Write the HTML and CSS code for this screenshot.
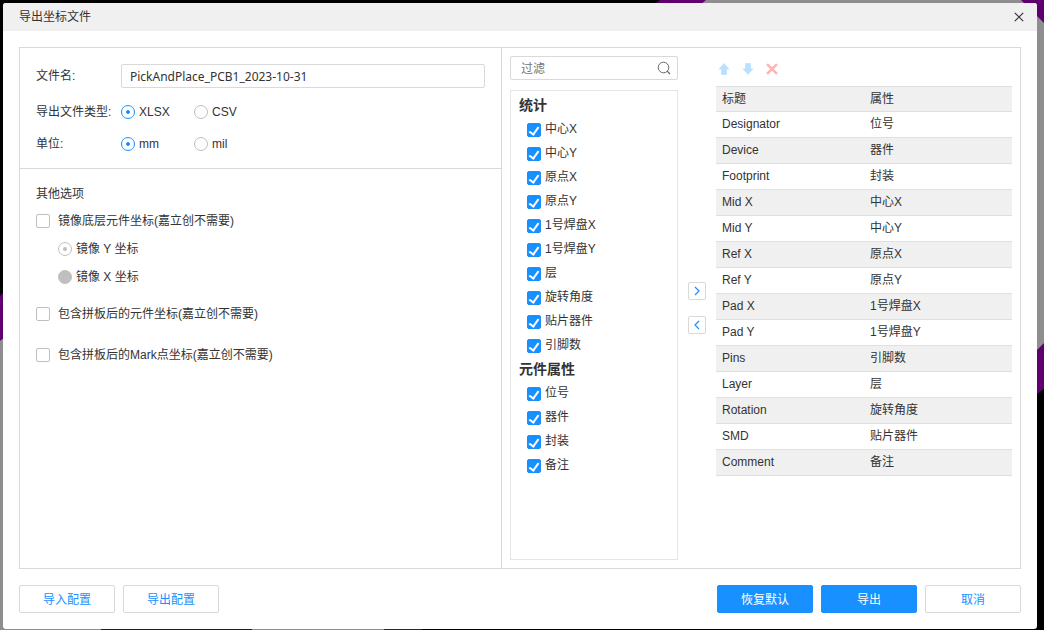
FILE: index.html
```html
<!DOCTYPE html>
<html lang="zh-CN">
<head>
<meta charset="utf-8">
<meta name="viewport" content="width=device-width, initial-scale=1">
<title>导出坐标文件</title>
<link rel="stylesheet" href="styles.css">
</head>
<body>
<svg class="backdrop" viewBox="0 0 1044 630" preserveAspectRatio="none" aria-hidden="true">
  <rect width="1044" height="630" fill="#000"/>
  <path d="M704 0H1044V345L700 630H252L101 630H0V340L300 200Z" fill="#8e8e8e"/>
  <path d="M0 0H660L656 3L3 293L0 296Z" fill="#000"/>
  <path d="M0 296L3 293L656 3L660 0H706L700 5L3 338L0 341Z" fill="#600070"/>
  <path d="M1021 0H1044V23Z" fill="#600070"/>
  <path d="M1044 343V389L1036 395V351Z" fill="#600070"/>
  <path d="M1044 389V630H420V620L1036 395Z" fill="#000"/>
  <path d="M101 620H252V630H101Z" fill="#1c1c1c"/>
  <path d="M384 620H422V630H384Z" fill="#600070"/>
</svg>
<form class="dialog">
  <header class="titlebar">
    <h1 class="title">导出坐标文件</h1>
    <button class="close" type="button" aria-label="关闭">
      <svg width="10" height="10" viewBox="0 0 10 10"><path d="M.8.8l8.4 8.4M9.2.8L.8 9.2" stroke="#333" stroke-width="1.2" fill="none"/></svg>
    </button>
  </header>
  <main class="content">
    <section class="settings">
      <div class="basic">
        <div class="row">
          <label class="row-label" for="filename">文件名:</label>
          <input class="textbox filename" id="filename" type="text" value="PickAndPlace_PCB1_2023-10-31">
        </div>
        <div class="row" role="radiogroup" aria-label="导出文件类型">
          <span class="row-label">导出文件类型:</span>
          <label class="choice"><input class="radio" type="radio" name="type" checked>XLSX</label>
          <label class="choice"><input class="radio" type="radio" name="type">CSV</label>
        </div>
        <div class="row" role="radiogroup" aria-label="单位">
          <span class="row-label">单位:</span>
          <label class="choice"><input class="radio" type="radio" name="unit" checked>mm</label>
          <label class="choice"><input class="radio" type="radio" name="unit">mil</label>
        </div>
      </div>
      <div class="others">
        <h2 class="others-title">其他选项</h2>
        <div class="mirror">
          <label class="option"><input class="checkbox" type="checkbox">镜像底层元件坐标(嘉立创不需要)</label>
          <label class="option sub"><input class="radio" type="radio" name="mirror" checked disabled>镜像 Y 坐标</label>
          <label class="option sub"><input class="radio" type="radio" name="mirror" disabled>镜像 X 坐标</label>
        </div>
        <label class="option"><input class="checkbox" type="checkbox">包含拼板后的元件坐标(嘉立创不需要)</label>
        <label class="option"><input class="checkbox" type="checkbox">包含拼板后的Mark点坐标(嘉立创不需要)</label>
      </div>
    </section>
    <section class="columns">
      <div class="picker">
        <div class="search textbox">
          <input class="search-input" type="search" placeholder="过滤" aria-label="过滤">
          <svg width="14" height="14" viewBox="0 0 14 14"><circle cx="6.5" cy="6.5" r="5.3" fill="none" stroke="#666"/><path d="M10.2 10.2l2.8 2.8" stroke="#666" stroke-width="1.2"/></svg>
        </div>
        <div class="list">
          <h3 class="group">统计</h3>
          <label class="item"><input class="checkbox" type="checkbox" checked>中心X</label>
          <label class="item"><input class="checkbox" type="checkbox" checked>中心Y</label>
          <label class="item"><input class="checkbox" type="checkbox" checked>原点X</label>
          <label class="item"><input class="checkbox" type="checkbox" checked>原点Y</label>
          <label class="item"><input class="checkbox" type="checkbox" checked>1号焊盘X</label>
          <label class="item"><input class="checkbox" type="checkbox" checked>1号焊盘Y</label>
          <label class="item"><input class="checkbox" type="checkbox" checked>层</label>
          <label class="item"><input class="checkbox" type="checkbox" checked>旋转角度</label>
          <label class="item"><input class="checkbox" type="checkbox" checked>贴片器件</label>
          <label class="item"><input class="checkbox" type="checkbox" checked>引脚数</label>
          <h3 class="group">元件属性</h3>
          <label class="item"><input class="checkbox" type="checkbox" checked>位号</label>
          <label class="item"><input class="checkbox" type="checkbox" checked>器件</label>
          <label class="item"><input class="checkbox" type="checkbox" checked>封装</label>
          <label class="item"><input class="checkbox" type="checkbox" checked>备注</label>
        </div>
      </div>
      <div class="transfer">
        <button class="move" type="button" aria-label="添加"><svg width="8" height="10" viewBox="0 0 8 10"><path d="M2 1l4 4-4 4" fill="none" stroke="#1890ff" stroke-width="1.2"/></svg></button>
        <button class="move" type="button" aria-label="移除"><svg width="8" height="10" viewBox="0 0 8 10"><path d="M6 1L2 5l4 4" fill="none" stroke="#1890ff" stroke-width="1.2"/></svg></button>
      </div>
      <div class="selected">
        <div class="tools">
          <button class="tool" type="button" aria-label="上移" disabled><svg width="12" height="12" viewBox="0 0 12 12"><path d="M6 0.6L10.8 6H8.4V11.4H3.6V6H1.2Z" fill="#bae0ff" stroke="#bae0ff" stroke-width=".8" stroke-linejoin="round"/></svg></button>
          <button class="tool" type="button" aria-label="下移" disabled><svg width="12" height="12" viewBox="0 0 12 12"><path d="M6 11.4L10.8 6H8.4V.6H3.6V6H1.2Z" fill="#bae0ff" stroke="#bae0ff" stroke-width=".8" stroke-linejoin="round"/></svg></button>
          <button class="tool" type="button" aria-label="删除" disabled><svg width="12" height="12" viewBox="0 0 12 12"><path d="M1.8 1.8l8.4 8.4M10.2 1.8l-8.4 8.4" stroke="#ffb3b3" stroke-width="2.6" stroke-linecap="round"/></svg></button>
        </div>
        <table class="table">
          <thead><tr><th>标题</th><th>属性</th></tr></thead>
          <tbody>
            <tr><td>Designator</td><td>位号</td></tr>
            <tr><td>Device</td><td>器件</td></tr>
            <tr><td>Footprint</td><td>封装</td></tr>
            <tr><td>Mid X</td><td>中心X</td></tr>
            <tr><td>Mid Y</td><td>中心Y</td></tr>
            <tr><td>Ref X</td><td>原点X</td></tr>
            <tr><td>Ref Y</td><td>原点Y</td></tr>
            <tr><td>Pad X</td><td>1号焊盘X</td></tr>
            <tr><td>Pad Y</td><td>1号焊盘Y</td></tr>
            <tr><td>Pins</td><td>引脚数</td></tr>
            <tr><td>Layer</td><td>层</td></tr>
            <tr><td>Rotation</td><td>旋转角度</td></tr>
            <tr><td>SMD</td><td>贴片器件</td></tr>
            <tr><td>Comment</td><td>备注</td></tr>
          </tbody>
        </table>
      </div>
    </section>
  </main>
  <footer class="footer">
    <div class="actions">
      <button class="btn" type="button">导入配置</button>
      <button class="btn" type="button">导出配置</button>
    </div>
    <div class="actions">
      <button class="btn primary" type="button">恢复默认</button>
      <button class="btn primary" type="submit">导出</button>
      <button class="btn" type="button">取消</button>
    </div>
  </footer>
</form>
</body>
</html>
```
FILE: styles.css
```css
*, ::before { box-sizing: border-box; }

body {
  margin: 0;
  min-height: 100vh;
  padding: 3px 7px 1px 3px;
  display: flex;
  background: #000;
  color: #333;
  font: 12px/24px "Liberation Sans", "Noto Sans CJK SC", sans-serif;
}

h1, h2, h3 { margin: 0; font-size: 12px; font-weight: 400; }
button, input { margin: 0; font: inherit; color: inherit; }
button { padding: 0; }
svg { display: block; }

.backdrop { position: absolute; inset: 0; width: 100%; height: 100%; }

.dialog {
  position: relative;
  flex: 1;
  display: flex;
  flex-direction: column;
  background: #fff;
  border-radius: 3px;
  overflow: hidden;
}

.titlebar {
  display: flex;
  align-items: center;
  justify-content: space-between;
  height: 28px;
  padding: 0 8px 0 16px;
  background: #f0f0f0;
}
.close {
  display: grid;
  place-items: center;
  width: 20px;
  height: 20px;
  border: 0;
  background: none;
}

.content {
  flex: 1;
  display: flex;
  margin: 16px 16px 0;
  border: 1px solid #d9d9d9;
}
.settings { flex: 1; border-right: 1px solid #d9d9d9; }

.basic {
  display: grid;
  gap: 8px;
  padding: 16px 16px 12px;
  border-bottom: 1px solid #d9d9d9;
}
.row { display: flex; align-items: center; }
.row:first-child { margin-bottom: 4px; }
.row-label { width: 85px; padding-top: 1px; line-height: 23px; }
.textbox {
  height: 24px;
  border: 1px solid #d9d9d9;
  border-radius: 2px;
  background: #fff;
}
.filename { flex: 1; padding: 1px 8px 0; font-family: "Noto Sans", "Noto Sans CJK SC", sans-serif; }
.choice { display: flex; align-items: center; gap: 4px; width: 73px; }

.radio, .checkbox {
  appearance: none;
  display: grid;
  place-items: center;
  flex: none;
  width: 14px;
  height: 14px;
  border: 1px solid #bfbfbf;
  background: #fff;
}
.radio { border-radius: 50%; }
.checkbox { border-radius: 2px; }
.radio:checked { border-color: #1890ff; }
.radio:checked::before {
  content: "";
  width: 4px;
  height: 4px;
  border-radius: 50%;
  background: #1890ff;
}
.radio:disabled { border-color: #bfbfbf; background: #bfbfbf; }
.radio:checked:disabled { background: #fff; }
.radio:checked:disabled::before { background: #bfbfbf; }
.checkbox:checked { border-color: #1890ff; background: #1890ff; }
.checkbox:checked::before {
  content: "";
  width: 6px;
  height: 10px;
  margin-bottom: 1px;
  border: solid #fff;
  border-width: 0 2px 2px 0;
  transform: rotate(36deg);
}

.others { display: grid; gap: 17px; padding: 13px 16px; }
.others-title { margin-bottom: -14px; line-height: 24px; }
.mirror { display: grid; gap: 4px; margin-bottom: -4px; }
.option { display: flex; align-items: center; gap: 8px; }
.sub { gap: 4px; padding-left: 22px; }

.columns { display: flex; gap: 10px; width: 518px; padding: 8px; }
.picker { display: flex; flex-direction: column; gap: 10px; width: 168px; }
.search { display: flex; align-items: center; padding: 0 6px 0 10px; }
.search-input {
  flex: 1;
  min-width: 0;
  padding: 1px 0 0;
  border: 0;
  outline: 0;
  background: none;
  appearance: none;
}
.search-input::placeholder { color: #757575; }
.list { flex: 1; padding: 2px 8px; border: 1px solid #e5e5e5; }
.group { font-size: 14px; font-weight: 700; line-height: 24px; }
.item { display: flex; align-items: center; gap: 4px; height: 24px; padding-left: 8px; line-height: 22px; }
.item .checkbox { margin-top: 2px; }

.transfer { display: flex; flex-direction: column; justify-content: center; gap: 16px; width: 18px; }
.move {
  display: grid;
  place-items: center;
  height: 18px;
  border: 1px solid #d9d9d9;
  border-radius: 2px;
  background: #fff;
}

.selected { flex: 1; }
.tools { display: flex; gap: 12px; padding: 7px 2px 11px; }
.tool { border: 0; background: none; }
.table { width: 100%; table-layout: fixed; border-collapse: separate; border-spacing: 0; border-top: 1px solid #e0e0e0; }
.table th, .table td {
  height: 26px;
  padding: 0 6px;
  border-bottom: 1px solid #e0e0e0;
  font-weight: 400;
  line-height: 24px;
  text-align: left;
  vertical-align: top;
}
.table th { height: 25px; }
.table th, .table tbody tr:nth-child(even) { background: #f0f0f0; }

.footer { display: flex; justify-content: space-between; padding: 16px; }
.actions { display: flex; gap: 8px; }
.btn {
  width: 96px;
  height: 28px;
  padding-top: 1px;
  border: 1px solid #d9d9d9;
  border-radius: 2px;
  background: #fff;
  color: #1890ff;
}
.primary { border-color: #1890ff; background: #1890ff; color: #fff; }
```
